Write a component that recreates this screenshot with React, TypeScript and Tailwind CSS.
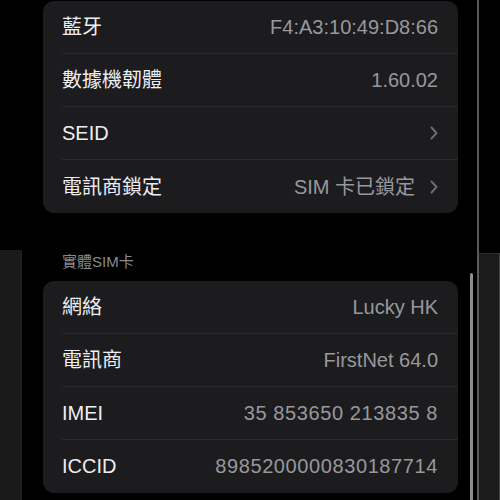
import React from 'react';

type Row = { label: string; value?: string; chevron?: boolean; wide?: boolean };

const deviceRows: Row[] = [
  { label: '藍牙', value: 'F4:A3:10:49:D8:66' },
  { label: '數據機韌體', value: '1.60.02' },
  { label: 'SEID', chevron: true },
  { label: '電訊商鎖定', value: 'SIM 卡已鎖定', chevron: true },
];

const simRows: Row[] = [
  { label: '網絡', value: 'Lucky HK' },
  { label: '電訊商', value: 'FirstNet 64.0' },
  { label: 'IMEI', value: '35 853650 213835 8', wide: true },
  { label: 'ICCID', value: '8985200000830187714', wide: true },
];

function Chevron() {
  return (
    <svg width="8" height="14" viewBox="0 0 8 14" className="ml-[15px] shrink-0">
      <path d="M1.5 1.5 L6.5 7 L1.5 12.5" fill="none" stroke="#6b6b70" strokeWidth="2" strokeLinecap="round" strokeLinejoin="round" />
    </svg>
  );
}

function Card({ rows }: { rows: Row[] }) {
  return (
    <div className="rounded-[11px] bg-[#1c1c1e] ml-[21px] mr-[19px]">
      {rows.map((r, i) => (
        <div key={r.label} className="pl-[19px]">
          <div
            className={`h-[53px] flex items-center justify-between pr-[20px] ${
              i < rows.length - 1 ? 'border-b border-[#2a2a2c]' : ''
            }`}
          >
            <span className="text-[20px] text-[#ededf2]">{r.label}</span>
            <span className="flex items-center">
              {r.value && (
                <span className={`text-[20px] text-[#98989d] ${r.wide ? 'tracking-[0.6px]' : ''}`}>{r.value}</span>
              )}
              {r.chevron && <Chevron />}
            </span>
          </div>
        </div>
      ))}
    </div>
  );
}

export default function App() {
  return (
    <div
      className="w-[500px] h-[500px] bg-black flex overflow-hidden"
      style={{ fontFamily: '"Liberation Sans", "Noto Sans CJK TC", sans-serif' }}
    >
      {/* left edge of the screen behind */}
      <div className="w-[22px] flex flex-col shrink-0">
        <div className="h-[250px]" />
        <div className="flex-1 bg-[#1a1a1a] border-r border-[#222]" />
      </div>

      {/* settings list */}
      <div className="flex-1 relative">
        <div className="pt-px">
          <Card rows={deviceRows} />
          <div className="pt-[38px] pb-[7px] pl-[40px] text-[15px] text-[#8a8a8e]">實體SIM卡</div>
          <Card rows={simRows} />
        </div>
        {/* scroll indicator */}
        <div className="absolute left-[448px] top-[273px] w-[3px] h-[240px] rounded-full bg-[#8d8d8d]" />
      </div>

      {/* right edge of the screen behind */}
      <div className="w-[23px] shrink-0 flex flex-col border-l-2 border-[#5a5a5a]">
        <div className="h-[253px]" />
        <div className="flex-1 bg-[#1b1b1b] border-t border-[#2a2a2a] border-r border-r-[#444]" />
      </div>
    </div>
  );
}
